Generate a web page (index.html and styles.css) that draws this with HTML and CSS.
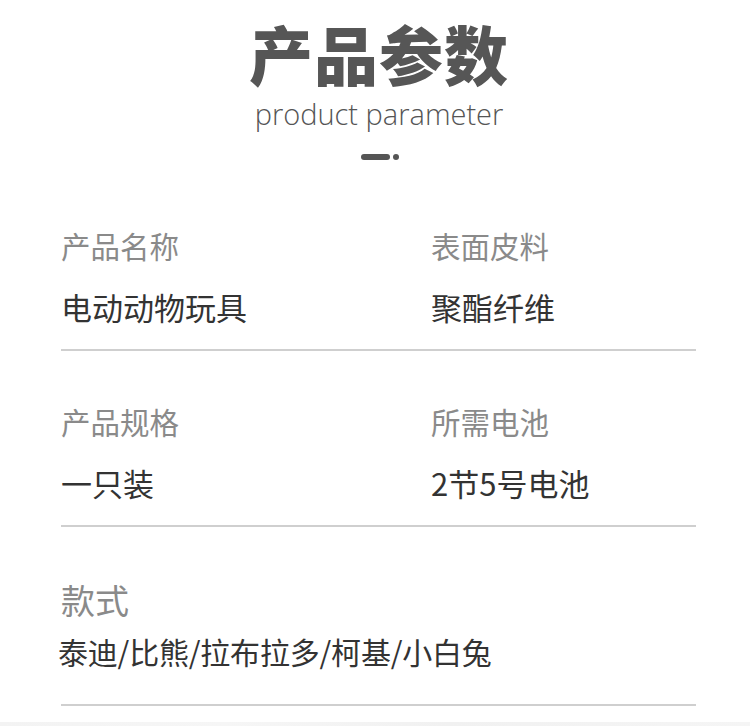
FILE: index.html
```html
<!DOCTYPE html>
<html lang="zh">
<head>
<meta charset="utf-8">
<link rel="stylesheet" href="styles.css">
</head>
<body>
<div class="page">
  <header class="head">
    <h1 class="title">产品参数</h1>
    <div class="subtitle">product parameter</div>
    <div class="dash"><span class="bar"></span><span class="dot"></span></div>
  </header>
  <section class="params">
    <div class="row">
      <div class="cell"><div class="label">产品名称</div><div class="value">电动动物玩具</div></div>
      <div class="cell"><div class="label">表面皮料</div><div class="value">聚酯纤维</div></div>
    </div>
    <div class="row">
      <div class="cell"><div class="label">产品规格</div><div class="value">一只装</div></div>
      <div class="cell"><div class="label">所需电池</div><div class="value">2节5号电池</div></div>
    </div>
    <div class="row row-wide">
      <div class="cell"><div class="label label-lg">款式</div><div class="value value-wide">泰迪/比熊/拉布拉多/柯基/小白兔</div></div>
    </div>
  </section>
  <div class="strip"></div>
</div>
</body>
</html>
```
FILE: styles.css
```css
html, body { margin: 0; padding: 0; background: #fff; }
body { font-family: "Noto Sans CJK SC", "Noto Sans", sans-serif; width: 750px; height: 726px; overflow: hidden; }
.page { display: flex; flex-direction: column; }
.head { display: flex; flex-direction: column; align-items: center; height: 175px; padding-left: 8px; box-sizing: border-box; }
.title { margin: 22px 0 0; font-size: 64px; line-height: 60px; font-weight: 900; color: #565656; letter-spacing: 1px; }
.subtitle { margin-top: 15px; font-family: "Open Sans", "Noto Sans", sans-serif; font-size: 29px; line-height: 34px; font-weight: 300; color: #555; letter-spacing: 0; }
.dash { display: flex; align-items: center; gap: 3px; margin-top: 23px; margin-left: 2px; }
.bar { display: block; width: 29px; height: 6px; border-radius: 3px; background: #555; }
.dot { display: block; width: 6px; height: 6px; border-radius: 50%; background: #555; }
.params { margin: 0 54px 0 61px; }
.row { display: grid; grid-template-columns: 370px 1fr; padding: 50px 0 22px; border-bottom: 2px solid #cfcfcf; }
.row-wide { grid-template-columns: 1fr; padding: 51px 0 33px; }
.label { font-size: 29.5px; line-height: 40px; color: #8a8a8a; }
.label-lg { font-size: 34px; line-height: 44px; }
.value { margin-top: 22px; font-size: 31px; line-height: 40px; color: #333; }
.value-wide { margin-top: 9px; margin-left: -3px; font-size: 30px; letter-spacing: -0.2px; }
.strip { margin-top: 16px; height: 8px; background: linear-gradient(90deg, #f3f3f3, #f6f6f6 30%, #f1f1f1 60%, #f5f5f5); }
```
